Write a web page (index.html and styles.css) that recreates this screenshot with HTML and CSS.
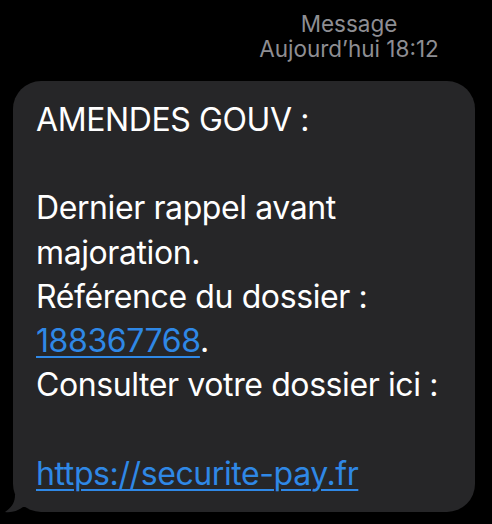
FILE: index.html
```html
<!DOCTYPE html>
<html lang="fr">
<head>
<meta charset="utf-8">
<link rel="stylesheet" href="styles.css">
</head>
<body>
<div class="screen">
  <header class="meta">
    <div class="meta-line">Message</div>
    <div class="meta-line">Aujourd’hui 18:12</div>
  </header>
  <div class="bubble">
    <p class="line">AMENDES GOUV :</p>
    <p class="line">&nbsp;</p>
    <p class="line">Dernier rappel avant</p>
    <p class="line">majoration.</p>
    <p class="line">Référence du dossier :</p>
    <p class="line"><a class="link" href="#">188367768</a>.</p>
    <p class="line">Consulter votre dossier ici :</p>
    <p class="line">&nbsp;</p>
    <p class="line"><a class="link" href="#">https://securite-pay.fr</a></p>
    <svg class="tail" width="24" height="18" viewBox="0 0 24 18"><path d="M10 0 C10 8 6 13 0 17 C8 18 14 15 18 12 L24 12 L24 0 Z" fill="#262628"/></svg>
  </div>
</div>
</body>
</html>
```
FILE: styles.css
```css
html, body {
  margin: 0;
  padding: 0;
  background: #000;
}
.screen {
  width: 492px;
  height: 524px;
  font-family: "Inter", "Liberation Sans", sans-serif;
  overflow: hidden;
}
.meta {
  padding: 11px 0 0 206px;
  text-align: center;
  color: #8e8e93;
  font-size: 22.5px;
  line-height: 25px;
}
.bubble {
  position: relative;
  margin: 20px 0 0 13px;
  width: 462px;
  height: 431px;
  box-sizing: border-box;
  background: #262628;
  border-radius: 28px;
  padding: 17px 0 0 23px;
  color: #fff;
}
.line {
  margin: 0;
  font-size: 32px;
  letter-spacing: -0.4px;
  line-height: 44.2px;
  white-space: nowrap;
}
.link {
  color: #2f88e6;
  text-decoration: underline;
  text-decoration-thickness: 2px;
  text-underline-offset: 4px;
}
.tail {
  position: absolute;
  left: -8px;
  bottom: -1px;
}
```
